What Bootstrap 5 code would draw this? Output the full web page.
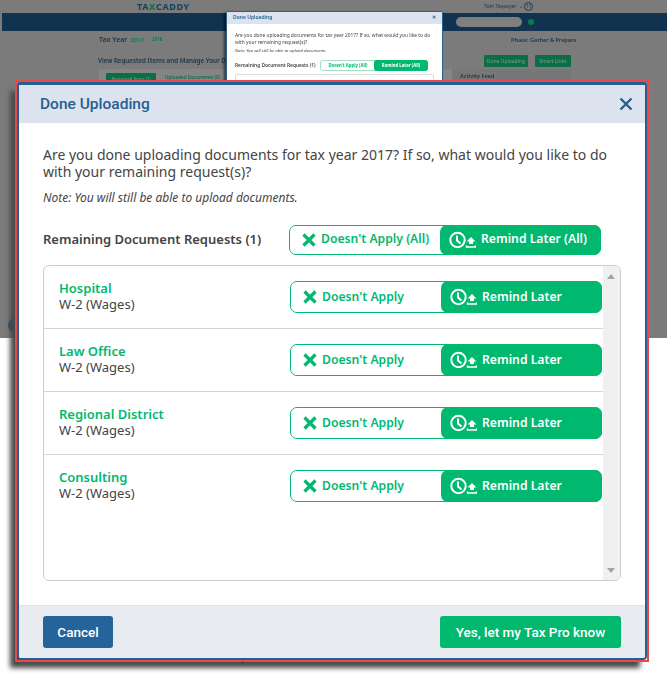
<!DOCTYPE html>
<html lang="en">
<head>
  <meta charset="UTF-8">
  <title>Done Uploading</title>
  <link href="https://cdn.jsdelivr.net/npm/bootstrap@5.3.0/dist/css/bootstrap.min.css" rel="stylesheet">
  <style>
    html, body { margin: 0; height: 677px; overflow: hidden; background: #fff; }
    body { font-family: "Noto Sans", "Open Sans", sans-serif; position: relative; width: 667px; }

    /* page behind the dialogs */
    .back-page { position: absolute; left: 0; top: 0; width: 667px; height: 338px; background: #7b7b7b; overflow: hidden; color: #1c3548; }
    .back-blur { position: absolute; inset: 0; filter: blur(.5px); }
    .back-logo { position: absolute; left: 137px; top: 0; font-size: 9px; font-weight: 700; letter-spacing: .6px; color: #16405f; }
    .back-logo b { color: #0a7b4a; }
    .back-user { position: absolute; left: 484px; top: 3px; font-size: 5px; }
    .back-num { position: absolute; left: 524px; top: 2px; width: 9px; height: 9px; border: 1px solid #1c3d58; border-radius: 50%; font-size: 5px; text-align: center; line-height: 7px; }
    .back-bar { position: absolute; left: 2px; right: 0; top: 13px; height: 18px; background: #12334f; }
    .back-search { position: absolute; left: 454px; top: 4px; width: 66px; height: 10px; border-radius: 5px; background: #7f7f7f; }
    .back-help { position: absolute; left: 526px; top: 6px; width: 6px; height: 6px; border-radius: 50%; background: #0a7b4a; }
    .back-txt { position: absolute; white-space: nowrap; font-weight: 600; }
    .back-year { left: 99px; top: 35px; font-size: 7px; }
    .back-year span { color: #0a7b4a; font-size: 6px; margin-left: 1px; }
    .back-year2 { left: 152px; top: 36px; font-size: 4.500px; color: #0a7b4a; }
    .back-phase { left: 511px; top: 36px; font-size: 5.500px; }
    .back-view { left: 98px; top: 56px; font-size: 6.200px; }
    .back-upl { left: 165px; top: 74px; font-size: 4.600px; color: #0a6f46; }
    .back-feed { left: 460px; top: 72px; font-size: 5.500px; }
    .back-btn { position: absolute; top: 55px; height: 12px; background: #0a6f46; color: #7d9f8d; font-size: 5px; line-height: 12px; text-align: center; border-radius: 1px; white-space: nowrap; }
    .back-done { left: 484px; width: 44px; }
    .back-links { left: 535px; width: 36px; }
    .back-req { left: 106px; top: 73px; width: 50px; font-size: 4.200px; }
    .back-panel { position: absolute; left: 99px; top: 69px; width: 353px; height: 269px; background: #858585; }
    .back-side { position: absolute; left: 452px; top: 69px; width: 119px; height: 269px; background: #777; }
    .back-dot { position: absolute; left: 8px; top: 318px; width: 15px; height: 15px; border-radius: 50%; background: #1f527c; }

    /* small copy of the dialog */
    .mini-modal { position: absolute; left: 226px; top: 11px; width: 217px; height: 85px; background: #fff; border: 1px solid #29618f; border-radius: 2px; box-shadow: -2px 2px 3px rgba(0,0,0,.6); overflow: hidden; color: #444; filter: blur(.25px); }
    .mini-head { height: 12px; background: #dce3ee; color: #24608f; font-size: 5px; font-weight: 600; padding: 2px 6px; display: flex; justify-content: space-between; }
    .mini-body { padding: 8px 8px 0; font-size: 4.850px; line-height: 6.500px; }
    .mini-note { font-size: 4.300px; font-style: italic; margin: 2px 0 7px; line-height: 6px; }
    .mini-row { display: flex; align-items: center; justify-content: space-between; font-weight: 600; font-size: 4.800px; padding-right: 6px; }
    .mini-toggle { display: flex; width: 108px; height: 11px; border: 1px solid #9fe0c5; border-radius: 3px; font-size: 4.300px; line-height: 9px; font-weight: 700; }
    .mini-toggle span { flex: 1; text-align: center; color: #00b96f; white-space: nowrap; }
    .mini-toggle span + span { background: #00b96f; color: #fff; border-radius: 3px; margin: -1px; line-height: 11px; }
    .mini-box { margin-top: 3px; height: 30px; border: 1px solid #ddd; border-radius: 2px; padding: 5px 0 0 85px; }
    .mini-strip { width: 108px; height: 11px; border-radius: 2px; background: linear-gradient(90deg, #c9efdd 49%, #00b96f 49%); }

    /* main dialog */
    .big-shadow { position: absolute; left: 10px; top: 91px; width: 630px; height: 577px; background: #4a4a4a; filter: blur(2.5px); }
    .big-peek { position: absolute; left: 178px; top: 651px; font-size: 9px; font-weight: 700; color: #222; white-space: nowrap; }
    .big-frame { position: absolute; left: 15px; top: 80px; width: 634px; height: 582px; border: 2px solid #e8474c; }
    .big-modal { position: absolute; left: 17px; top: 82px; width: 630px; height: 578px; background: #fff; border: 2px solid #24608f; border-top-width: 3px; border-radius: 4px; overflow: hidden; display: flex; flex-direction: column; }
    .big-head { height: 38px; background: #dce3ee; color: #24608f; padding: 0 12px 0 21px; flex: none; }
    .big-head h1 { font-family: Roboto, sans-serif; font-size: 15.500px; font-weight: 500; margin: 0; }
    .big-x { width: 14px; height: 14px; }
    .big-body { flex: 1; padding: 23px 24px 0; color: #444; }
    .big-q { font-size: 14px; line-height: 17px; margin: 0; }
    .big-note { font-size: 12px; font-style: italic; margin: 10px 0 0; line-height: 16px; }
    .req-title { font-size: 13px; font-weight: 600; color: #444; }
    .req-all { margin-top: 18px; height: 31px; padding-right: 20px; }
    .req-box { margin-top: 10px; height: 316px; border: 1px solid #ccc; border-radius: 6px; position: relative; overflow: hidden; }
    .req-line { height: 63px; border-bottom: 1px solid #d5d5d5; padding-left: 15px; width: 559px; }
    .req-line-end { border-bottom-color: transparent; }
    .req-info { padding-bottom: 2px; }
    .req-name { font-size: 13px; font-weight: 600; color: #00b96f; line-height: 16px; }
    .req-type { font-size: 13px; color: #444; line-height: 16px; }
    .scroll-rail { position: absolute; right: 0; top: 0; bottom: 0; width: 17px; background: #f0f0f0; }
    .scroll-up, .scroll-down { position: absolute; left: 4px; width: 0; height: 0; border-left: 4px solid transparent; border-right: 4px solid transparent; }
    .scroll-up { top: 8px; border-bottom: 5px solid #a3a3a3; }
    .scroll-down { bottom: 7px; border-top: 5px solid #a3a3a3; }

    .tog { display: flex; width: 312px; height: 32px; border: 1px solid #00b96f; border-radius: 7px; font-size: 12.200px; font-weight: 600; flex: none; margin-right: 1px; }
    .tog-all { height: 30px; margin-right: 0; }
    .tog-a { width: 151px; color: #00b96f; background: #fff; border-radius: 7px 0 0 7px; padding-left: 12px; gap: 5px; }
    .tog-b { flex: 1; color: #fff; background: #00b96f; border-radius: 7px; margin: -1px; padding-left: 9px; gap: 5px; }
    .big-foot { height: 53px; background: #e8ebf0; border-top: 1px solid #e0e3e8; padding: 0 24px; flex: none; }
    .btn-cancel, .btn-yes { font-family: Roboto, sans-serif; font-size: 13.500px; font-weight: 500; color: #fff; height: 32px; border-radius: 3px; border: 0; display: flex; align-items: center; justify-content: center; padding: 0; }
    .btn-cancel { width: 70px; background: #24649b; }
    .btn-yes { width: 181px; background: #00b96f; }
  </style>
</head>
<body>
  <svg width="0" height="0" class="position-absolute">
    <symbol id="ico-x" viewBox="0 0 14 14"><path d="M1.500 1.500 12.500 12.500M12.500 1.500 1.500 12.500" fill="none" stroke="currentColor" stroke-width="3.200"/></symbol>
    <symbol id="ico-close" viewBox="0 0 14 14"><path d="M1.500 1.500 12.500 12.500M12.500 1.500 1.500 12.500" fill="none" stroke="currentColor" stroke-width="2.400"/></symbol>
    <symbol id="ico-later" viewBox="0 0 27 18">
      <circle cx="8.500" cy="9" r="7.200" fill="none" stroke="currentColor" stroke-width="2"/>
      <path d="M8 4.500v5l3.500 3" fill="none" stroke="currentColor" stroke-width="2"/>
      <path d="M22 6l-4.500 4.500h2.500v2.500h4v-2.500h2.500z" fill="currentColor"/>
      <path d="M17.500 14.500v1.500h9v-1.500" fill="none" stroke="currentColor" stroke-width="1.400"/>
    </symbol>
  </svg>

  <!-- page behind -->
  <div class="back-page">
    <div class="back-blur">
      <span class="back-logo">TA<b>X</b>CADDY</span>
      <span class="back-user">Tom Taxpayer &nbsp;⌄</span>
      <span class="back-num">11</span>
      <div class="back-bar">
        <div class="back-search"></div>
        <div class="back-help"></div>
      </div>
      <div class="back-panel"></div>
      <div class="back-side"></div>
      <div class="back-dot"></div>
      <span class="back-txt back-year">Tax Year <span>2017</span></span>
      <span class="back-txt back-year2">2018</span>
      <span class="back-txt back-phase">Phase: Gather &amp; Prepare</span>
      <span class="back-txt back-view">View Requested Items and Manage Your Documents</span>
      <div class="back-btn back-done">Done Uploading</div>
      <div class="back-btn back-links">Smart Links</div>
      <div class="back-btn back-req">Requested Items (1)</div>
      <span class="back-txt back-upl">Uploaded Documents (0)</span>
      <span class="back-txt back-feed">Activity Feed</span>
    </div>
  </div>

  <!-- small copy -->
  <div class="mini-modal">
    <div class="mini-head"><span>Done Uploading</span><span>✕</span></div>
    <div class="mini-body">
      <div>Are you done uploading documents for tax year 2017? If so, what would you like to do with your remaining request(s)?</div>
      <div class="mini-note">Note: You will still be able to upload documents.</div>
      <div class="mini-row"><span>Remaining Document Requests (1)</span>
        <div class="mini-toggle"><span>Doesn't Apply (All)</span><span>Remind Later (All)</span></div>
      </div>
      <div class="mini-box"><div class="mini-strip"></div></div>
    </div>
  </div>

  <div class="big-shadow"></div>
  <div class="big-peek">Document Requests</div>
  <div class="big-frame"></div>

  <!-- main dialog -->
  <div class="big-modal">
    <div class="big-head d-flex align-items-center justify-content-between">
      <h1>Done Uploading</h1>
      <svg class="big-x"><use href="#ico-close"/></svg>
    </div>
    <div class="big-body">
      <p class="big-q">Are you done uploading documents for tax year 2017? If so, what would you like to do with your remaining request(s)?</p>
      <p class="big-note">Note: You will still be able to upload documents.</p>
      <div class="req-all d-flex align-items-center justify-content-between">
        <span class="req-title">Remaining Document Requests (1)</span>
        <div class="tog tog-all">
          <div class="tog-a d-flex align-items-center"><svg width="14" height="14"><use href="#ico-x"/></svg>Doesn't Apply (All)</div>
          <div class="tog-b d-flex align-items-center"><svg width="27" height="18"><use href="#ico-later"/></svg>Remind Later (All)</div>
        </div>
      </div>
      <div class="req-box">
        <div class="req-line d-flex align-items-center justify-content-between">
          <div class="req-info"><div class="req-name">Hospital</div><div class="req-type">W-2 (Wages)</div></div>
          <div class="tog">
            <div class="tog-a d-flex align-items-center"><svg width="14" height="14"><use href="#ico-x"/></svg>Doesn't Apply</div>
            <div class="tog-b d-flex align-items-center"><svg width="27" height="18"><use href="#ico-later"/></svg>Remind Later</div>
          </div>
        </div>
        <div class="req-line d-flex align-items-center justify-content-between">
          <div class="req-info"><div class="req-name">Law Office</div><div class="req-type">W-2 (Wages)</div></div>
          <div class="tog">
            <div class="tog-a d-flex align-items-center"><svg width="14" height="14"><use href="#ico-x"/></svg>Doesn't Apply</div>
            <div class="tog-b d-flex align-items-center"><svg width="27" height="18"><use href="#ico-later"/></svg>Remind Later</div>
          </div>
        </div>
        <div class="req-line d-flex align-items-center justify-content-between">
          <div class="req-info"><div class="req-name">Regional District</div><div class="req-type">W-2 (Wages)</div></div>
          <div class="tog">
            <div class="tog-a d-flex align-items-center"><svg width="14" height="14"><use href="#ico-x"/></svg>Doesn't Apply</div>
            <div class="tog-b d-flex align-items-center"><svg width="27" height="18"><use href="#ico-later"/></svg>Remind Later</div>
          </div>
        </div>
        <div class="req-line req-line-end d-flex align-items-center justify-content-between">
          <div class="req-info"><div class="req-name">Consulting</div><div class="req-type">W-2 (Wages)</div></div>
          <div class="tog">
            <div class="tog-a d-flex align-items-center"><svg width="14" height="14"><use href="#ico-x"/></svg>Doesn't Apply</div>
            <div class="tog-b d-flex align-items-center"><svg width="27" height="18"><use href="#ico-later"/></svg>Remind Later</div>
          </div>
        </div>
        <div class="scroll-rail"><span class="scroll-up"></span><span class="scroll-down"></span></div>
      </div>
    </div>
    <div class="big-foot d-flex align-items-center justify-content-between">
      <button type="button" class="btn btn-cancel">Cancel</button>
      <button type="button" class="btn btn-yes">Yes, let my Tax Pro know</button>
    </div>
  </div>
  <script src="https://cdn.jsdelivr.net/npm/bootstrap@5.3.0/dist/js/bootstrap.bundle.min.js"></script>
</body>
</html>
